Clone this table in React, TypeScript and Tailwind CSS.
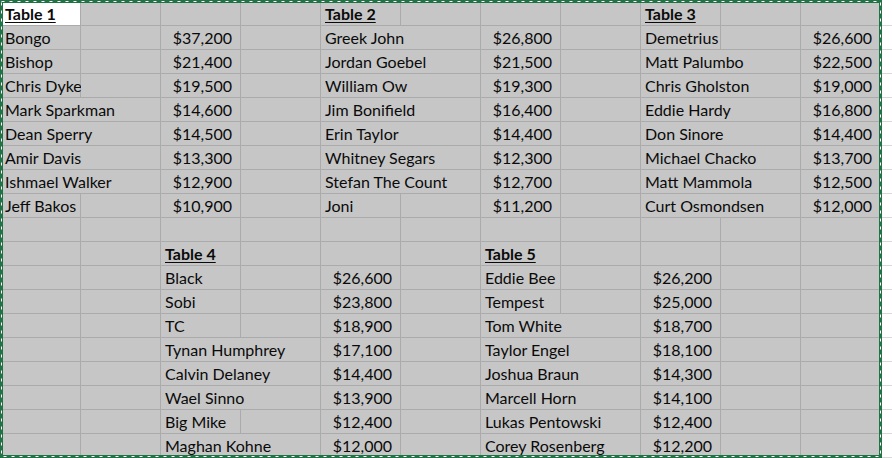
type Cell = { text?: string; span?: 1 | 2; num?: boolean; head?: boolean; active?: boolean }

const t1: [string, string][] = [
  ['Bongo', '$37,200'],
  ['Bishop', '$21,400'],
  ['Chris Dyke', '$19,500'],
  ['Mark Sparkman', '$14,600'],
  ['Dean Sperry', '$14,500'],
  ['Amir Davis', '$13,300'],
  ['Ishmael Walker', '$12,900'],
  ['Jeff Bakos', '$10,900'],
]
const t2: [string, string][] = [
  ['Greek John', '$26,800'],
  ['Jordan Goebel', '$21,500'],
  ['William Ow', '$19,300'],
  ['Jim Bonifield', '$16,400'],
  ['Erin Taylor', '$14,400'],
  ['Whitney Segars', '$12,300'],
  ['Stefan The Count', '$12,700'],
  ['Joni', '$11,200'],
]
const t3: [string, string][] = [
  ['Demetrius', '$26,600'],
  ['Matt Palumbo', '$22,500'],
  ['Chris Gholston', '$19,000'],
  ['Eddie Hardy', '$16,800'],
  ['Don Sinore', '$14,400'],
  ['Michael Chacko', '$13,700'],
  ['Matt Mammola', '$12,500'],
  ['Curt Osmondsen', '$12,000'],
]
const t4: [string, string][] = [
  ['Black', '$26,600'],
  ['Sobi', '$23,800'],
  ['TC', '$18,900'],
  ['Tynan Humphrey', '$17,100'],
  ['Calvin Delaney', '$14,400'],
  ['Wael Sinno', '$13,900'],
  ['Big Mike', '$12,400'],
  ['Maghan Kohne', '$12,000'],
]
const t5: [string, string][] = [
  ['Eddie Bee', '$26,200'],
  ['Tempest', '$25,000'],
  ['Tom White', '$18,700'],
  ['Taylor Engel', '$18,100'],
  ['Joshua Braun', '$14,300'],
  ['Marcell Horn', '$14,100'],
  ['Lukas Pentowski', '$12,400'],
  ['Corey Rosenberg', '$12,200'],
]

// names whose text spills into the next column (gridline hidden there)
const spills = new Set([
  'Mark Sparkman', 'Dean Sperry', 'Amir Davis', 'Ishmael Walker',
  'Greek John', 'Jordan Goebel', 'William Ow', 'Jim Bonifield', 'Erin Taylor', 'Whitney Segars', 'Stefan The Count',
  'Matt Palumbo', 'Chris Gholston', 'Eddie Hardy', 'Don Sinore', 'Michael Chacko', 'Matt Mammola', 'Curt Osmondsen',
  'Tynan Humphrey', 'Calvin Delaney', 'Wael Sinno', 'Maghan Kohne',
  'Tom White', 'Taylor Engel', 'Joshua Braun', 'Marcell Horn', 'Lukas Pentowski', 'Corey Rosenberg',
])

const empty: Cell = {}
const name = (n: string): Cell[] => (spills.has(n) ? [{ text: n, span: 2 }] : [{ text: n }, empty])
const val = (v: string): Cell => ({ text: v, num: true })

const rows: Cell[][] = [
  [
    { text: 'Table 1', head: true, active: true }, empty, empty, empty,
    { text: 'Table 2', head: true }, empty, empty, empty,
    { text: 'Table 3', head: true }, empty, empty,
  ],
  ...t1.map((_, i) => [
    ...name(t1[i][0]), val(t1[i][1]), empty,
    ...name(t2[i][0]), val(t2[i][1]), empty,
    ...name(t3[i][0]), val(t3[i][1]),
  ]),
  Array.from({ length: 11 }, () => empty),
  [
    empty, empty, { text: 'Table 4', head: true }, empty, empty, empty,
    { text: 'Table 5', head: true }, empty, empty, empty, empty,
  ],
  ...t4.map((_, i) => [
    empty, empty, ...name(t4[i][0]), val(t4[i][1]), empty,
    ...name(t5[i][0]), val(t5[i][1]), empty, empty,
  ]),
]

const GridCell = ({ cell }: { cell: Cell }) => (
  <div
    className={`flex h-6 items-end overflow-visible whitespace-nowrap border-b border-r border-[#ababab] pb-[3px] text-[16px] leading-4 text-[#0a0a0a] ${
      cell.span === 2 ? 'col-span-2' : ''
    } ${cell.active ? 'bg-white' : 'bg-[#c6c6c6]'} ${cell.num ? 'justify-end pr-[8px]' : 'pl-[4px]'}`}
  >
    {cell.text && (
      <span className={cell.head ? 'font-bold underline decoration-1 underline-offset-[2px]' : ''}>{cell.text}</span>
    )}
  </div>
)

export default function App() {
  return (
    <div className="relative h-[458px] w-[892px] overflow-hidden bg-white font-['Lato','Liberation_Sans',sans-serif]">
      <div className="grid grid-cols-[repeat(11,80px)_12px] pl-px pt-[2px]">
        {rows.map((row, r) => (
          <div key={r} className="contents">
            {row.map((cell, c) => (
              <GridCell key={c} cell={cell} />
            ))}
            <div className="h-6 border-b border-[#dadada] bg-white" />
          </div>
        ))}
      </div>
      {/* copy marquee */}
      <svg className="pointer-events-none absolute left-0 top-0" width="892" height="458">
        <rect x="1.5" y="1.5" width="879" height="455" fill="none" stroke="#217346" strokeWidth="3" />
        <rect x="1.5" y="1.5" width="879" height="455" fill="none" stroke="#ffffff" strokeWidth="1" strokeDasharray="3 5" />
      </svg>
    </div>
  )
}
